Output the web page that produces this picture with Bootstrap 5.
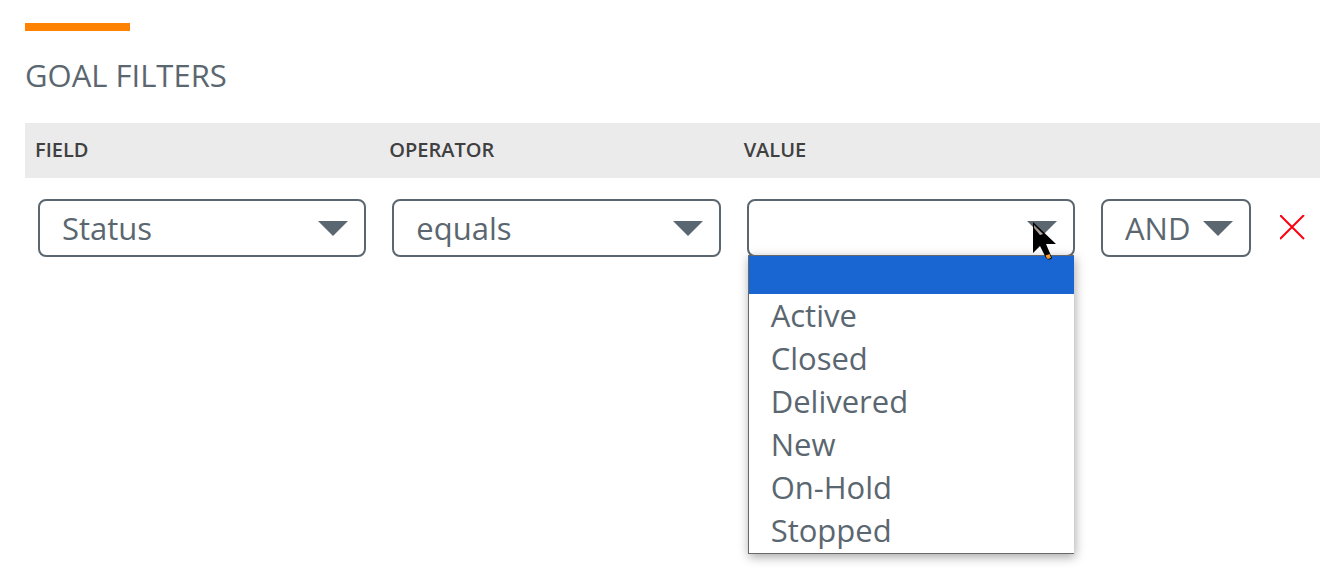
<!DOCTYPE html>
<html lang="en">
<head>
<meta charset="utf-8">
<meta name="viewport" content="width=device-width, initial-scale=1">
<title>Goal Filters</title>
<link href="https://cdn.jsdelivr.net/npm/bootstrap@5.3.0/dist/css/bootstrap.min.css" rel="stylesheet">
<style>
  :root { --slate: #5b6770; }
  body { font-family: "Open Sans", "Noto Sans", sans-serif; color: var(--slate); background: #fff; }
  .page { padding: 23px 14px 0 25px; }
  .accent { width: 105px; height: 8px; background: #ff8200; }
  .title { font-size: 31px; line-height: 44px; font-weight: 400; margin: 22px 0 26px; }
  .filters { table-layout: fixed; color: var(--slate); }
  .filters th { background: #ebebeb; color: #404040; font-size: 20px; line-height: 27px; font-weight: 600; padding: 13px 10px 15px; border: 0; }
  .filters td { padding: 21px 13px; border: 0; }
  .col-join { width: 176px; }
  .col-remove { width: 56px; }
  .filters .picker { height: 58px; border: 2px solid var(--slate); border-radius: 8px; color: var(--slate); font-size: 31px; line-height: 44px; padding: 5px 56px 5px 22px;
    background: #fff url("data:image/svg+xml,%3Csvg xmlns='http://www.w3.org/2000/svg' viewBox='0 0 30 15'%3E%3Cpath d='M0 0h30L15 15z' fill='%235b6770'/%3E%3C/svg%3E") no-repeat right 16px center / 30px 15px; }
  .filters .picker:focus { box-shadow: none; }
  .options { top: 56px; left: 1px; right: 1px; z-index: 2; background: #fff; border: 1px solid #66696c; border-right: 0; padding-bottom: 1px; box-shadow: 1px 3px 10px rgba(0,0,0,.35); font-size: 31px; line-height: 43px; }
  .options li { height: 43px; padding-left: 22px; }
  .options li.chosen { height: 38px; background: #1966d2; }
  .pointer { right: 18px; top: 22px; z-index: 3; width: 26px; height: 40px; }
  .remove { width: 26px; height: 26px; }
</style>
</head>
<body>
<main class="page min-vh-100">
  <div class="accent"></div>
  <h1 class="title">GOAL FILTERS</h1>
  <table class="table filters mb-0">
    <colgroup><col><col><col><col class="col-join"><col class="col-remove"></colgroup>
    <thead>
      <tr><th scope="col">FIELD</th><th scope="col">OPERATOR</th><th scope="col">VALUE</th><th></th><th></th></tr>
    </thead>
    <tbody>
      <tr>
        <td><select class="form-select picker" aria-label="Field"><option>Status</option></select></td>
        <td><select class="form-select picker" aria-label="Operator"><option>equals</option></select></td>
        <td>
          <div class="position-relative">
            <select class="form-select picker" aria-label="Value"><option></option></select>
            <ul class="options list-unstyled position-absolute mb-0" role="listbox" aria-label="Value options">
              <li class="chosen" role="option" aria-selected="true"></li>
              <li role="option">Active</li>
              <li role="option">Closed</li>
              <li role="option">Delivered</li>
              <li role="option">New</li>
              <li role="option">On-Hold</li>
              <li role="option">Stopped</li>
            </ul>
            <svg class="pointer position-absolute" viewBox="0 0 26 40" aria-hidden="true">
              <defs><linearGradient id="sheen" x1="0" y1="0" x2="1" y2="1"><stop offset="0" stop-color="#8d8580"/><stop offset="1" stop-color="#c3b5ab"/></linearGradient></defs>
              <path d="M2 1v31l7-7 6 12q3 3 6 0l-6-14h10z" fill="#000"/>
              <path d="M3 4l9 9-3 1-6-7z" fill="url(#sheen)"/>
              <path d="M14.500 34.500l4-1.500 1.500 3.500q-2 2-4 1z" fill="#f29a2e"/>
            </svg>
          </div>
        </td>
        <td><select class="form-select picker pe-5" aria-label="Join"><option>AND</option></select></td>
        <td class="px-0 align-middle">
          <button type="button" class="btn border-0 p-0 d-flex ms-3 remove" aria-label="Remove filter">
            <svg viewBox="0 0 26 26" width="26" height="26"><path d="M0 0l24 24M24 0L0 24" stroke="#ff0012" stroke-width="2" fill="none"/></svg>
          </button>
        </td>
      </tr>
    </tbody>
  </table>
</main>
<script src="https://cdn.jsdelivr.net/npm/bootstrap@5.3.0/dist/js/bootstrap.bundle.min.js"></script>
</body>
</html>
